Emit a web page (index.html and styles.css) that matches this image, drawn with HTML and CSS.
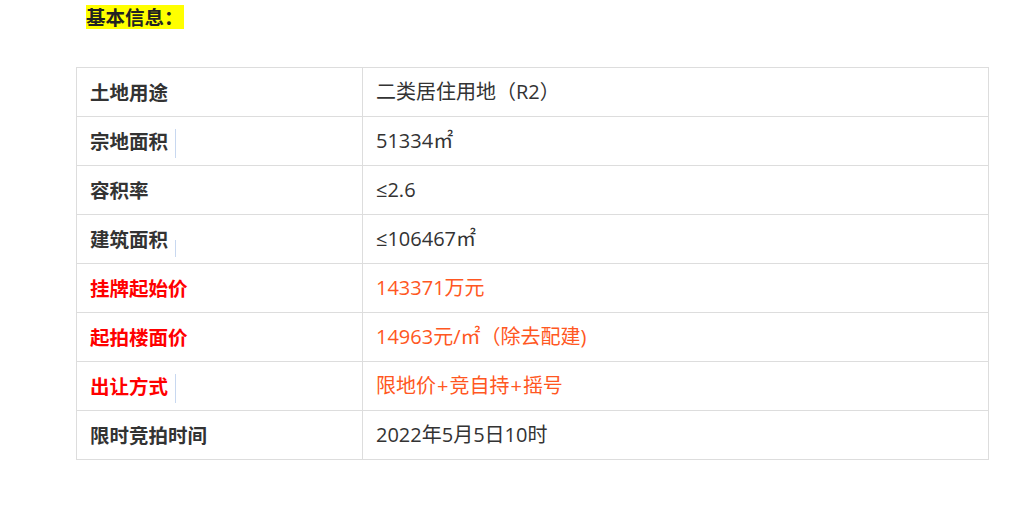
FILE: index.html
```html
<!DOCTYPE html>
<html lang="zh">
<head>
<meta charset="utf-8">
<link rel="stylesheet" href="styles.css">
</head>
<body>
<div class="page">
  <div class="title-row"><span class="title">基本信息：</span></div>
  <table class="info">
    <tr><td class="k">土地用途</td><td class="v">二类居住用地（R2）</td></tr>
    <tr><td class="k">宗地面积<span class="caret tall"></span></td><td class="v">51334㎡</td></tr>
    <tr><td class="k">容积率</td><td class="v">≤2.6</td></tr>
    <tr><td class="k">建筑面积<span class="caret short"></span></td><td class="v">≤106467㎡</td></tr>
    <tr><td class="k red">挂牌起始价</td><td class="v orange">143371万元</td></tr>
    <tr><td class="k red">起拍楼面价</td><td class="v orange">14963元/㎡（除去配建)</td></tr>
    <tr><td class="k red">出让方式<span class="caret tall"></span></td><td class="v orange">限地价<span class="plus">+</span>竞自持<span class="plus">+</span>摇号</td></tr>
    <tr><td class="k">限时竞拍时间</td><td class="v">2022年5月5日10时</td></tr>
  </table>
</div>
</body>
</html>
```

FILE: styles.css
```css
html, body {
  margin: 0;
  padding: 0;
  background: #ffffff;
}
body {
  font-family: "Noto Sans CJK SC", "Noto Sans", sans-serif;
  color: #333333;
}
.page {
  padding: 5px 0 0 76px;
}
.title-row {
  padding-left: 10px;
  height: 62px;
}
.title {
  display: inline-block;
  background: #ffff00;
  font-size: 19.5px;
  font-weight: 700;
  line-height: 24px;
  color: #222222;
}
.info {
  border-collapse: collapse;
  width: 913px;
  table-layout: fixed;
}
.info td {
  border: 1px solid #dddddd;
  padding: 10px 13px;
  font-size: 19.5px;
  line-height: 28px;
  height: 28px;
  vertical-align: middle;
  white-space: nowrap;
}
.info td.k {
  width: 259px;
  font-weight: 700;
  color: #333333;
}
.info td.v {
  font-family: "Open Sans", "Noto Sans CJK SC", sans-serif;
  font-size: 20px;
  color: #333333;
}
.info td.red {
  color: #ff0000;
}
.info td.orange {
  color: #ff5722;
}
.plus {
  margin: 0 1px;
}
.caret {
  display: inline-block;
  border-left: 1px solid #c8d8f0;
  margin-left: 7px;
}
.caret.tall {
  height: 29px;
  margin-top: -8px;
  margin-bottom: -8px;
  vertical-align: middle;
}
.caret.short {
  height: 17px;
  margin-top: -4px;
  margin-bottom: -4px;
  vertical-align: -6px;
}
```
